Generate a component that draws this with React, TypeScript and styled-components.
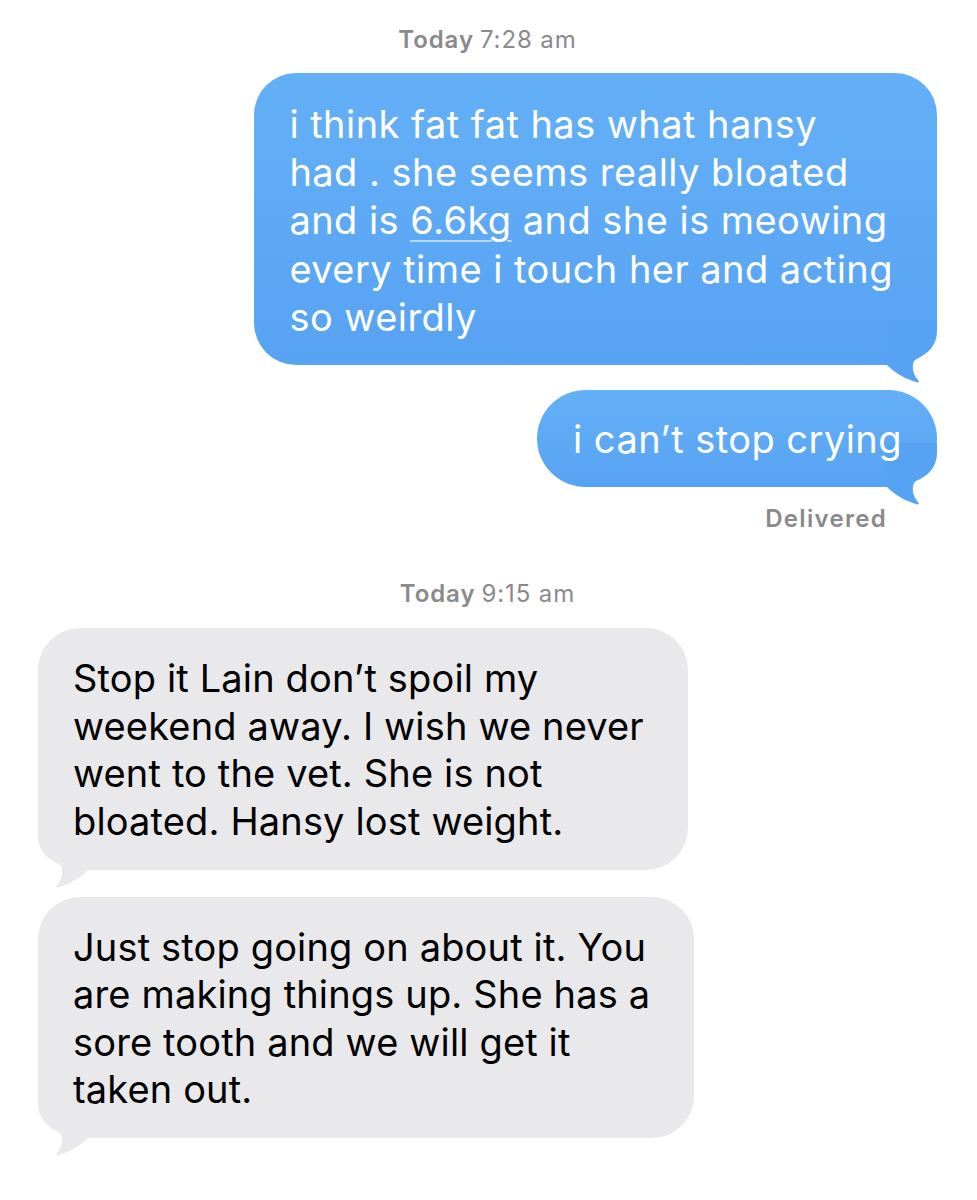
import styled, { createGlobalStyle } from 'styled-components'

const GlobalStyle = createGlobalStyle`
  html, body {
    margin: 0;
    padding: 0;
    background: #ffffff;
  }
  body {
    font-family: Inter, Roboto, "Liberation Sans", sans-serif;
    -webkit-font-smoothing: antialiased;
  }
`

const Thread = styled.main`
  display: flex;
  flex-direction: column;
  padding: 24px 40px 40px 38px;
  width: 977px;
  box-sizing: border-box;
`

const Stamp = styled.div<{ $gap: number }>`
  align-self: center;
  margin-bottom: ${({ $gap }) => $gap}px;
  color: #8a8a8e;
  font-size: 24px;
  line-height: 32px;
  letter-spacing: 0.9px;

  b {
    font-weight: 600;
    margin-right: 6px;
  }
`

const Row = styled.div<{ $side: 'out' | 'in'; $gap: number }>`
  display: flex;
  justify-content: ${({ $side }) => ($side === 'out' ? 'flex-end' : 'flex-start')};
  margin-bottom: ${({ $gap }) => $gap}px;
`

const Bubble = styled.div<{ $side: 'out' | 'in'; $pill?: boolean }>`
  position: relative;
  isolation: isolate;
  box-sizing: border-box;
  padding: ${({ $pill }) => ($pill ? '25px 35px 24px 36px' : '27px 44px 24px 35px')};
  border-radius: ${({ $pill }) => ($pill ? '49px' : '42px')};
  background: ${({ $side }) =>
    $side === 'out' ? 'linear-gradient(180deg, #64b0f7 0%, #57a3f3 100%)' : '#e9e9eb'};
  color: ${({ $side }) => ($side === 'out' ? '#ffffff' : '#000000')};
  font-size: 38px;
  line-height: ${({ $side }) => ($side === 'out' ? '48.2px' : '47.6px')};
  letter-spacing: ${({ $side }) => ($side === 'out' ? '0.45px' : '0.15px')};
  white-space: nowrap;

  u {
    text-decoration-color: rgba(255, 255, 255, 0.55);
    text-decoration-thickness: 2px;
    text-underline-offset: 6px;
  }
`

const Tail = styled.svg<{ $side: 'out' | 'in' }>`
  position: absolute;
  z-index: -1;
  bottom: -18px;
  width: 52px;
  height: 62px;
  ${({ $side }) => ($side === 'out' ? 'right: 0;' : 'left: 0; transform: scaleX(-1);')}

  path {
    fill: ${({ $side }) => ($side === 'out' ? '#57a3f3' : '#e9e9eb')};
  }
`

const Delivered = styled.div`
  align-self: flex-end;
  margin: 17px 50px 44px 0;
  color: #8a8a8e;
  font-size: 24px;
  font-weight: 600;
  line-height: 30px;
  letter-spacing: 1.3px;
`

type Side = 'out' | 'in'

const BubbleTail = ({ side }: { side: Side }) => (
  <Tail $side={side} viewBox='0 0 52 62'>
    <path d='M52 0 V10 C52 24 43 33 31 38 C26 41 27 53 33 59 C35 61 33 62 31 61 C21 58 11 53 2 44 V0 Z' />
  </Tail>
)

const Message = ({
  side,
  lines,
  gap,
  pill,
}: {
  side: Side
  lines: React.ReactNode[]
  gap: number
  pill?: boolean
}) => (
  <Row $side={side} $gap={gap}>
    <Bubble $side={side} $pill={pill}>
      {lines.map((line, i) => (
        <div key={i}>{line}</div>
      ))}
      <BubbleTail side={side} />
    </Bubble>
  </Row>
)

export default function App() {
  return (
    <>
      <GlobalStyle />
      <Thread>
        <Stamp $gap={17}>
          <b>Today</b>7:28 am
        </Stamp>
        <Message
          side='out'
          gap={25}
          lines={[
            'i think fat fat has what hansy',
            'had . she seems really bloated',
            <>
              and is <u>6.6kg</u> and she is meowing
            </>,
            'every time i touch her and acting',
            'so weirdly',
          ]}
        />
        <Message side='out' gap={0} pill lines={['i can’t stop crying']} />
        <Delivered>Delivered</Delivered>
        <Stamp $gap={18}>
          <b>Today</b>9:15 am
        </Stamp>
        <Message
          side='in'
          gap={27}
          lines={[
            'Stop it Lain don’t spoil my',
            'weekend away. I wish we never',
            'went to the vet. She is not',
            'bloated. Hansy lost weight.',
          ]}
        />
        <Message
          side='in'
          gap={0}
          lines={[
            'Just stop going on about it. You',
            'are making things up. She has a',
            'sore tooth and we will get it',
            'taken out.',
          ]}
        />
      </Thread>
    </>
  )
}
